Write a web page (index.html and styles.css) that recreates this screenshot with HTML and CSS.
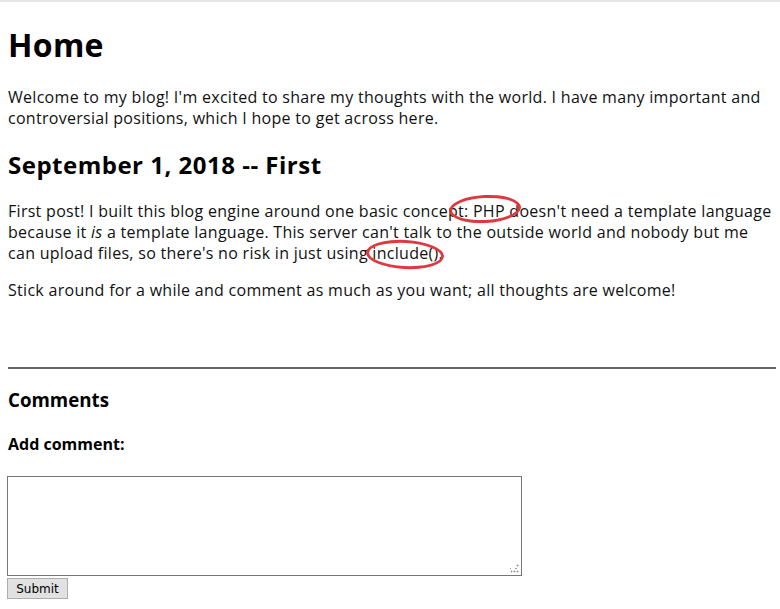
FILE: index.html
```html
<!DOCTYPE html>
<html>
<head>
<meta charset="utf-8">
<title>Home</title>
<link rel="stylesheet" href="styles.css">
</head>
<body>
<div class="topline"></div>
<main class="page">
  <h1 class="title">Home</h1>
  <p class="para">Welcome to my blog! I'm excited to share my thoughts with the world. I have many important and controversial positions, which I hope to get across here.</p>
  <h2 class="post-title">September 1, 2018 -- First</h2>
  <p class="para">First post! I built this blog engine around one basic concept: PHP doesn't need a template language because it <em>is</em> a template language. This server can't talk to the outside world and nobody but me can upload files, so there's no risk in just using include().</p>
  <p class="para">Stick around for a while and comment as much as you want; all thoughts are welcome!</p>
  <hr class="rule">
  <h3 class="comments">Comments</h3>
  <h4 class="add">Add comment:</h4>
  <form class="form">
    <div class="box-wrap">
      <textarea class="box"></textarea>
      <span class="grip"></span>
    </div>
    <button type="button" class="submit">Submit</button>
  </form>
</main>
<div class="mark mark-php"></div>
<div class="mark mark-inc"></div>
</body>
</html>
```
FILE: styles.css
```css
html, body { margin: 0; padding: 0; background: #fff; }
body { font-family: "Open Sans", "Noto Sans", sans-serif; color: #000; font-size: 16px; position: relative; }
.topline { height: 2px; background: #e6e6e6; }
.page { padding: 0 4px 0 8px; }
.title { font-size: 32px; font-weight: 700; margin: 20px 0 0; padding-bottom: 3px; line-height: 46px; letter-spacing: 0.3px; }
.para { margin: 16px 0; line-height: 21px; letter-spacing: 0.29px; color: #111; }
.post-title { font-size: 24px; margin: 20px 0 0; padding-bottom: 4px; line-height: 32px; letter-spacing: 0.5px; }
.rule { border: 0; border-top: 2px solid #646464; margin: 66px 0 0; }
.comments { font-size: 18.72px; margin: 18px 0 0; line-height: 26px; }
.add { font-size: 16px; margin: 19px 0 0; line-height: 24px; }
.form { margin-top: 20px; display: flex; flex-direction: column; align-items: flex-start; }
.box-wrap { position: relative; margin-left: -1px; height: 100px; }
.box { display: block; width: 509px; height: 94px; border: 1px solid #767676; margin: 0; padding: 2px; resize: none; font-family: inherit; }
.grip { position: absolute; right: 3px; bottom: 3px; width: 9px; height: 9px;
  background:
    radial-gradient(circle, #9a9a9a 0.9px, transparent 1.1px) 6px 0 / 3px 3px no-repeat,
    radial-gradient(circle, #9a9a9a 0.9px, transparent 1.1px) 3px 3px / 6px 3px repeat-x,
    radial-gradient(circle, #9a9a9a 0.9px, transparent 1.1px) 0 6px / 3px 3px repeat-x; }
.submit { margin: 2px 0 0 -1px; font-family: "DejaVu Sans", sans-serif; font-size: 12px; height: 21px; width: 61px; padding: 0; background: #e1e1e1; border: 1px solid #adadad; color: #000; }
.mark { position: absolute; border: 3px solid #e0383e; border-radius: 50%; }
.mark-php { left: 449px; top: 195px; width: 66px; height: 22px; transform: rotate(-3deg); }
.mark-inc { left: 366px; top: 240px; width: 72px; height: 23px; transform: rotate(3deg); }
```
